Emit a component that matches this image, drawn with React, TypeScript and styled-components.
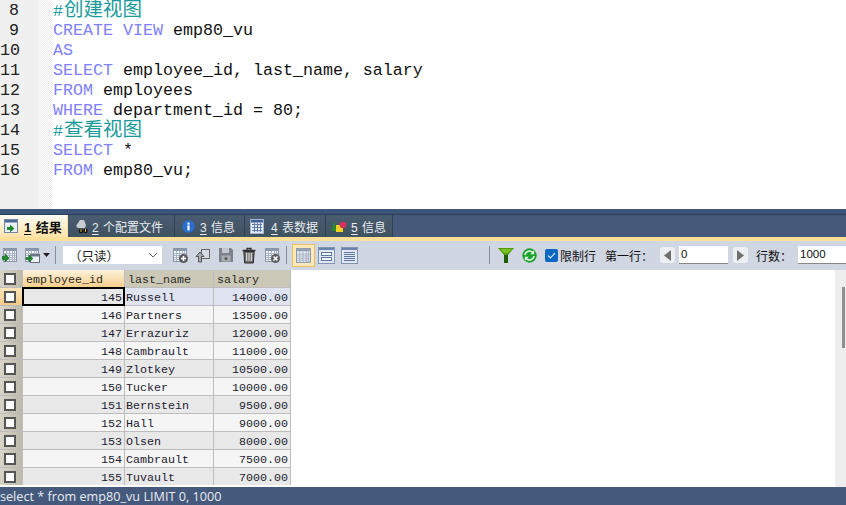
import React from 'react';
import styled, { createGlobalStyle } from 'styled-components';

const mono = '"Liberation Mono", "Noto Sans CJK SC", monospace';
const cjk = '"Liberation Sans", "Noto Sans CJK SC", sans-serif';

const GlobalStyle = createGlobalStyle`
  html, body { margin: 0; padding: 0; background: #fff; overflow: hidden; }
  * { box-sizing: border-box; }
`;

const Page = styled.div`
  width: 846px;
  height: 505px;
  display: flex;
  flex-direction: column;
  font-family: ${cjk};
  overflow: hidden;
`;

/* sql editor */
const Editor = styled.div`
  height: 209px;
  display: flex;
  flex: none;
  background: #fff;
`;

const Gutter = styled.div`
  width: 38px;
  padding-top: 1px;
  background: #f0f0f0;
  flex: none;
`;

const LineNo = styled.div`
  width: 19px;
  height: 20px;
  text-align: right;
  font: 16.67px/20px ${mono};
  color: #222;
`;

const FoldMargin = styled.div`
  width: 15px;
  flex: none;
  background-color: #fff;
  background-image: conic-gradient(#ececec 25%, #fff 0 50%, #ececec 0 75%, #fff 0);
  background-size: 2px 2px;
`;

const Code = styled.div`
  flex: 1;
  padding-top: 1px;
  font: 16.67px/20px ${mono};
  color: #111;
`;

const CodeLine = styled.div`
  height: 20px;
  white-space: pre;
`;

const Kw = styled.span`
  color: #8080ff;
`;

const Comment = styled.span`
  color: #1a9a9a;
  b {
    font-weight: 400;
    font-size: 19.5px;
    line-height: 20px;
    margin-left: 1px;
  }
`;

/* bottom tabs */
const TopStripe = styled.div`
  height: 6px;
  flex: none;
  background: #3d5578;
  border-bottom: 1px solid #2a3c58;
`;

const TabBar = styled.div`
  height: 22px;
  flex: none;
  display: flex;
  background: #46597b;
`;

const Tab = styled.div<{ $w: number; $pl: number; $gap: number; $active?: boolean }>`
  width: ${(p) => p.$w}px;
  flex: none;
  display: flex;
  align-items: center;
  gap: ${(p) => p.$gap}px;
  padding-left: ${(p) => p.$pl}px;
  font-size: ${(p) => (p.$active ? 13 : 12)}px;
  font-weight: ${(p) => (p.$active ? 700 : 400)};
  color: ${(p) => (p.$active ? '#111' : '#e8ecf0')};
  background: ${(p) =>
    p.$active ? 'linear-gradient(#fffdf6, #fde3a8)' : 'linear-gradient(#4a5c70, #3f5260)'};
  border-right: 1px solid ${(p) => (p.$active ? '#fde3a8' : '#2f4054')};
  u {
    text-underline-offset: 2px;
    font-weight: ${(p) => (p.$active ? 700 : 400)};
    margin-right: 1px;
  }
`;

const YellowLine = styled.div`
  height: 4px;
  flex: none;
  background: #fddf98;
`;

/* result toolbar */
const Toolbar = styled.div`
  height: 29px;
  flex: none;
  display: flex;
  align-items: center;
  background: #d0d7e2;
  padding: 0 0 1px 2px;
  font-size: 12px;
  color: #111;
`;

const IconSlot = styled.div<{ $ml?: number }>`
  display: flex;
  align-items: center;
  flex: none;
  margin-left: ${(p) => p.$ml ?? 0}px;
`;

const Sep = styled.div<{ $ml: number }>`
  width: 1px;
  height: 18px;
  flex: none;
  background: #8a8f98;
  margin-left: ${(p) => p.$ml}px;
`;

const ReadOnlySelect = styled.div`
  width: 99px;
  height: 18px;
  flex: none;
  margin-left: 7px;
  background: #fff;
  display: flex;
  align-items: center;
  justify-content: space-between;
  padding: 0 4px 0 6px;
  font-size: 12.5px;
  color: #222;
`;

const ViewButton = styled.div<{ $on?: boolean; $ml: number }>`
  width: 23px;
  height: 23px;
  flex: none;
  margin-left: ${(p) => p.$ml}px;
  display: flex;
  align-items: center;
  justify-content: center;
  background: ${(p) => (p.$on ? '#fde9b8' : 'transparent')};
  border: 1px solid ${(p) => (p.$on ? '#e8c060' : 'transparent')};
`;

const Check = styled.div`
  width: 13px;
  height: 13px;
  flex: none;
  margin-left: 8px;
  border-radius: 2px;
  background: #0a66c2;
  display: flex;
  align-items: center;
  justify-content: center;
`;

const Label = styled.span<{ $ml: number }>`
  flex: none;
  margin-left: ${(p) => p.$ml}px;
  font-size: 12px;
  white-space: nowrap;
`;

const StepButton = styled.div<{ $ml: number }>`
  width: 15px;
  height: 16px;
  flex: none;
  margin-left: ${(p) => p.$ml}px;
  background: #edeff3;
  border-radius: 3px;
  display: flex;
  align-items: center;
  justify-content: center;
`;

const NumberInput = styled.div<{ $w: number; $ml: number }>`
  width: ${(p) => p.$w}px;
  height: 18px;
  flex: none;
  margin-left: ${(p) => p.$ml}px;
  background: #fff;
  border-bottom: 1px solid #888;
  padding-left: 2px;
  font: 11.5px/17px "Liberation Sans", sans-serif;
  color: #111;
`;

/* result grid */
const ResultArea = styled.div`
  flex: 1;
  min-height: 0;
  display: flex;
  background: #fff;
  overflow: hidden;
`;

const GridWrap = styled.div`
  flex: 1;
  min-width: 0;
`;

const DataGrid = styled.div`
  display: grid;
  width: 291px;
  grid-template-columns: 22px 101px 88px 76px;
  grid-auto-rows: 17px;
  gap: 1px;
  background: #bdbdbd;
  border-right: 1px solid #bdbdbd;
  font: 11.67px/20px ${mono};
  color: #1c1c30;
`;

const HeadCell = styled.div<{ $sorted?: boolean }>`
  padding-left: 3px;
  white-space: nowrap;
  overflow: hidden;
  color: #2a2a1a;
  background: ${(p) => (p.$sorted ? 'linear-gradient(#fdf2dc, #f8cf8c)' : '#cbc8b8')};
`;

const RowHead = styled.div<{ $current?: boolean }>`
  display: flex;
  align-items: center;
  justify-content: center;
  padding-right: 2px;
  background: ${(p) =>
    p.$current ? 'linear-gradient(#fbe6bd, #f3c987)' : 'linear-gradient(90deg, #d8d5c8, #bcb9aa)'};
`;

const RowBox = styled.div`
  width: 12px;
  height: 12px;
  background: #fff;
  border: 2px solid #555;
`;

const Cell = styled.div<{ $right?: boolean; $tone: string; $current?: boolean }>`
  padding: 0 ${(p) => (p.$right ? 2 : 1)}px 0 1px;
  text-align: ${(p) => (p.$right ? 'right' : 'left')};
  white-space: nowrap;
  overflow: hidden;
  background: ${(p) => p.$tone};
  position: relative;
  ${(p) => (p.$current ? 'overflow: visible; outline: 2px solid #000; outline-offset: -1px; z-index: 1;' : '')}
`;

const ScrollTrack = styled.div`
  width: 11px;
  flex: none;
  background: #eeeeee;
  padding: 17px 1px 0 7px;
`;

const ScrollThumb = styled.div`
  height: 61px;
  background: #8f8f8f;
`;

const StatusBar = styled.div`
  height: 18px;
  flex: none;
  background: #44597c;
  color: #e8ebf0;
  font: 12.65px/18px "Open Sans", "Liberation Sans", sans-serif;
  white-space: pre;
`;

/* toolbar drawings */
const TableIcon: React.FC<{ size?: number; children?: React.ReactNode }> = ({ size = 16, children }) => (
  <svg width={size} height={size} viewBox="0 0 16 16">
    <rect x="1.5" y="1.5" width="13" height="13" fill="#f4f6fa" stroke="#8a96a8" />
    <rect x="2" y="2" width="12" height="2" fill="#8a99b0" />
    <path d="M2 6.500h12M2 8.500h12M2 10.500h12M2 12.500h12M4.500 4v10M7.500 4v10M10.500 4v10M12.500 4v10" stroke="#a9b4c6" strokeWidth="1" />
    {children}
  </svg>
);

const GreenArrow = () => <path d="M0 9.500h3V7l4 4-4 4v-2.500H0z" fill="#1c8a2a" stroke="#0c5a18" strokeWidth=".5" />;

const ExportArrow = () => (
  <g>
    <rect x="6.500" y="7.500" width="9" height="8" fill="#eef2f8" stroke="#6a6f78" />
    <rect x="7" y="8" width="8" height="1.500" fill="#6a7890" />
    <path d="M2 10.500h3V8l4 3.500L5 15v-2.500H2z" fill="#1c8a2a" stroke="#0c5a18" strokeWidth=".5" />
  </g>
);

const Badge: React.FC<{ cross?: boolean }> = ({ cross }) => (
  <g>
    <circle cx="11.500" cy="11.500" r="4.500" fill="#5c5c5c" />
    <path
      d={cross ? 'M9.500 9.500l4 4M13.500 9.500l-4 4' : 'M11.500 9v5M9 11.500h5'}
      stroke="#fff"
      strokeWidth="1.600"
    />
  </g>
);

const ImportIcon = () => (
  <svg width="16" height="16" viewBox="0 0 16 16">
    <rect x="6.500" y="2.500" width="8" height="9" fill="#d8dce2" stroke="#666" />
    <path d="M5 5L1 9.500h2.500V15h3V9.500H9z" fill="#a8acb2" stroke="#555" />
  </svg>
);

const SaveIcon = () => (
  <svg width="16" height="16" viewBox="0 0 16 16">
    <path d="M1 1h12l2 2v12H1z" fill="#7d828a" />
    <rect x="4" y="1" width="7" height="5" fill="#c4c8ce" />
    <rect x="3.500" y="8.500" width="9" height="6" fill="#a8adb4" />
    <circle cx="8" cy="11.500" r="1.500" fill="#555" />
  </svg>
);

const TrashIcon = () => (
  <svg width="16" height="17" viewBox="0 0 16 17">
    <path d="M1.500 3.500h13M6 3V1.500h4V3" fill="none" stroke="#333" strokeWidth="1.300" />
    <path d="M2.800 4.500h10.400L12.300 16H3.700z" fill="#6e6e6e" stroke="#2c2c2c" />
    <path d="M5.700 6v8M8 6v8M10.300 6v8" stroke="#e0e0e0" strokeWidth="1.100" />
  </svg>
);

const SplitIcon = () => (
  <svg width="17" height="17" viewBox="0 0 17 17">
    <rect x=".5" y=".5" width="16" height="16" fill="#e2e8f2" stroke="#7f95b5" />
    <rect x="1" y="1" width="15" height="2" fill="#6a84ab" />
    <rect x="3.500" y="5.500" width="10" height="3" fill="#f4f6fa" stroke="#5d78a0" />
    <rect x="3.500" y="10.500" width="10" height="3" fill="#f4f6fa" stroke="#5d78a0" />
  </svg>
);

const FormIcon = () => (
  <svg width="17" height="17" viewBox="0 0 17 17">
    <rect x=".5" y=".5" width="16" height="16" fill="#e2e8f2" stroke="#7f95b5" />
    <rect x="1" y="1" width="15" height="2" fill="#6a84ab" />
    <path d="M3 5.500h11M3 7.500h11M3 9.500h11M3 11.500h11M3 13.500h11" stroke="#5d78a0" />
  </svg>
);

const FilterIcon = () => (
  <svg width="16" height="15" viewBox="0 0 16 15">
    <path d="M0 0h16l-6 7v8H6V7z" fill="#4f9a0c" />
    <path d="M6 7h4v8H6z" fill="#1f5c06" />
    <path d="M2 1h12l-4 4H6z" fill="#7cc21e" />
  </svg>
);

const RefreshIcon = () => (
  <svg width="15" height="15" viewBox="0 0 15 15">
    <circle cx="7.500" cy="7.500" r="7.200" fill="#1aa32c" />
    <path d="M3 7a4.600 4.600 0 0 1 8-2.400M12 8a4.600 4.600 0 0 1-8 2.400" fill="none" stroke="#e4f8e4" strokeWidth="1.700" />
    <path d="M12.200 2.200v4h-4zM2.800 12.800v-4h4z" fill="#e4f8e4" />
  </svg>
);

const ResultTabIcon = () => (
  <svg width="14" height="15" viewBox="0 0 14 15">
    <rect x=".5" y=".5" width="13" height="13" fill="#eef2f8" stroke="#6f87a8" />
    <rect x="1" y="1" width="12" height="2.500" fill="#50698e" />
    <path d="M3 8h3V5.500l4.500 4-4.500 4V11H3z" fill="#1c8a2a" />
  </svg>
);

const ProfileTabIcon = () => (
  <svg width="14" height="15" viewBox="0 0 14 15">
    <path d="M1 7l4-6h4l2 5-1 3H3z" fill="#c9ccd0" />
    <circle cx="6" cy="12" r="2.200" fill="#111" />
    <circle cx="10.500" cy="12" r="2.200" fill="#111" />
    <rect x="5.500" y="10" width="1" height="3" fill="#e8b830" />
    <rect x="10" y="10" width="1" height="3" fill="#e8b830" />
  </svg>
);

const InfoTabIcon = () => (
  <svg width="13" height="13" viewBox="0 0 13 13">
    <circle cx="6.500" cy="6.500" r="6.200" fill="#2a6fd0" />
    <rect x="5.400" y="5.400" width="2.200" height="5" fill="#fff" />
    <rect x="5.400" y="2.600" width="2.200" height="2" fill="#fff" />
  </svg>
);

const GridTabIcon = () => (
  <svg width="14" height="15" viewBox="0 0 14 15">
    <rect x=".5" y=".5" width="13" height="14" fill="#e4eaf4" stroke="#a0b4d0" />
    <rect x="1" y="1" width="12" height="2.500" fill="#3f5f96" />
    <path d="M2 5.500h10M2 8.500h10M2 11.500h10M4.500 4v9M7.500 4v9M10.500 4v9" stroke="#5d79a8" />
  </svg>
);

const ShapesTabIcon = () => (
  <svg width="16" height="13" viewBox="0 0 16 13">
    <path d="M3 1l2.600 10H.4z" fill="#2d8a2a" />
    <rect x="5" y="5" width="7" height="7" fill="#f4d020" />
    <circle cx="12" cy="5" r="3.300" fill="#d8305c" />
  </svg>
);

const Triangle: React.FC<{ left?: boolean }> = ({ left }) => (
  <svg width="7" height="11" viewBox="0 0 7 11">
    <path d={left ? 'M7 0v11L0 5.500z' : 'M0 0v11l7-5.500z'} fill="#6f6f6f" />
  </svg>
);

const rows: [number, string, string][] = [
  [145, 'Russell', '14000.00'],
  [146, 'Partners', '13500.00'],
  [147, 'Errazuriz', '12000.00'],
  [148, 'Cambrault', '11000.00'],
  [149, 'Zlotkey', '10500.00'],
  [150, 'Tucker', '10000.00'],
  [151, 'Bernstein', '9500.00'],
  [152, 'Hall', '9000.00'],
  [153, 'Olsen', '8000.00'],
  [154, 'Cambrault', '7500.00'],
  [155, 'Tuvault', '7000.00'],
];

const toneFor = (i: number) => {
  if (i === 0) return '#e0e4f0';
  return i % 2 === 1 ? '#f5f5f5' : '#e8e8e8';
};

const App: React.FC = () => (
  <Page>
    <GlobalStyle />
    <Editor>
      <Gutter>
        {[8, 9, 10, 11, 12, 13, 14, 15, 16].map((n) => (
          <LineNo key={n}>{n}</LineNo>
        ))}
      </Gutter>
      <FoldMargin />
      <Code>
        <CodeLine><Comment>#<b>创建视图</b></Comment></CodeLine>
        <CodeLine><Kw>CREATE VIEW</Kw> emp80_vu</CodeLine>
        <CodeLine><Kw>AS</Kw></CodeLine>
        <CodeLine><Kw>SELECT</Kw> employee_id, last_name, salary</CodeLine>
        <CodeLine><Kw>FROM</Kw> employees</CodeLine>
        <CodeLine><Kw>WHERE</Kw> department_id = 80;</CodeLine>
        <CodeLine><Comment>#<b>查看视图</b></Comment></CodeLine>
        <CodeLine><Kw>SELECT</Kw> *</CodeLine>
        <CodeLine><Kw>FROM</Kw> emp80_vu;</CodeLine>
      </Code>
    </Editor>

    <TopStripe />
    <TabBar>
      <Tab $w={68} $pl={4} $gap={6} $active><ResultTabIcon /><span><u>1</u> 结果</span></Tab>
      <Tab $w={107} $pl={7} $gap={3}><ProfileTabIcon /><span><u>2</u> 个配置文件</span></Tab>
      <Tab $w={70} $pl={7} $gap={5}><InfoTabIcon /><span><u>3</u> 信息</span></Tab>
      <Tab $w={81} $pl={5} $gap={7}><GridTabIcon /><span><u>4</u> 表数据</span></Tab>
      <Tab $w={67} $pl={5} $gap={4}><ShapesTabIcon /><span><u>5</u> 信息</span></Tab>
    </TabBar>
    <YellowLine />

    <Toolbar>
      <IconSlot><TableIcon><GreenArrow /></TableIcon></IconSlot>
      <IconSlot $ml={6}><TableIcon><ExportArrow /></TableIcon></IconSlot>
      <IconSlot $ml={3}>
        <svg width="7" height="4" viewBox="0 0 7 4"><path d="M0 0h7L3.500 4z" fill="#222" /></svg>
      </IconSlot>
      <Sep $ml={5} />
      <ReadOnlySelect>
        <span>（只读）</span>
        <svg width="10" height="6" viewBox="0 0 10 6"><path d="M1 1l4 4 4-4" fill="none" stroke="#666" /></svg>
      </ReadOnlySelect>
      <IconSlot $ml={10}><TableIcon><Badge /></TableIcon></IconSlot>
      <IconSlot $ml={7}><ImportIcon /></IconSlot>
      <IconSlot $ml={7}><SaveIcon /></IconSlot>
      <IconSlot $ml={7}><TrashIcon /></IconSlot>
      <IconSlot $ml={7}><TableIcon><Badge cross /></TableIcon></IconSlot>
      <Sep $ml={6} />
      <ViewButton $on $ml={5}><TableIcon size={17} /></ViewButton>
      <ViewButton $ml={0}><SplitIcon /></ViewButton>
      <ViewButton $ml={0}><FormIcon /></ViewButton>
      <Sep $ml={128} />
      <IconSlot $ml={8}><FilterIcon /></IconSlot>
      <IconSlot $ml={8}><RefreshIcon /></IconSlot>
      <Check>
        <svg width="9" height="7" viewBox="0 0 9 7"><path d="M1 3.500l2.500 2.500L8 1" fill="none" stroke="#cfe4fa" strokeWidth="1.200" /></svg>
      </Check>
      <Label $ml={2}>限制行</Label>
      <Label $ml={9}>第一行：</Label>
      <StepButton $ml={7}><Triangle left /></StepButton>
      <NumberInput $w={49} $ml={4}>0</NumberInput>
      <StepButton $ml={5}><Triangle /></StepButton>
      <Label $ml={8}>行数：</Label>
      <NumberInput $w={48} $ml={6}>1000</NumberInput>
    </Toolbar>

    <ResultArea>
      <GridWrap>
        <DataGrid>
          <RowHead><RowBox /></RowHead>
          <HeadCell $sorted>employee_id</HeadCell>
          <HeadCell>last_name</HeadCell>
          <HeadCell>salary</HeadCell>
          {rows.map(([id, name, salary], i) => (
            <React.Fragment key={id}>
              <RowHead $current={i === 0}><RowBox /></RowHead>
              <Cell $right $current={i === 0} $tone={i === 0 ? '#e8e8e8' : toneFor(i)}>{id}</Cell>
              <Cell $tone={toneFor(i)}>{name}</Cell>
              <Cell $right $tone={toneFor(i)}>{salary}</Cell>
            </React.Fragment>
          ))}
        </DataGrid>
      </GridWrap>
      <ScrollTrack>
        <ScrollThumb />
      </ScrollTrack>
    </ResultArea>

    <StatusBar>select * from emp80_vu LIMIT 0, 1000</StatusBar>
  </Page>
);

export default App;
